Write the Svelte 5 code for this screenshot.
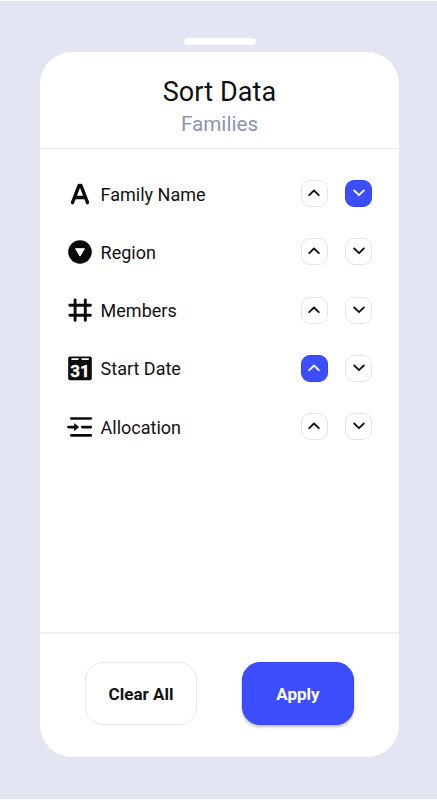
<script lang="ts">
  type Direction = "asc" | "desc" | null;

  interface Field {
    id: string;
    label: string;
    sort: Direction;
  }

  let fields: Field[] = [
    { id: "name", label: "Family Name", sort: "desc" },
    { id: "region", label: "Region", sort: null },
    { id: "members", label: "Members", sort: null },
    { id: "date", label: "Start Date", sort: "asc" },
    { id: "allocation", label: "Allocation", sort: null },
  ];

  function toggle(id: string, dir: Direction) {
    fields = fields.map((f) =>
      f.id === id ? { ...f, sort: f.sort === dir ? null : dir } : f
    );
  }

  function clearAll() {
    fields = fields.map((f) => ({ ...f, sort: null }));
  }
</script>

<div class="screen">
  <div class="handle"></div>
  <section class="sheet">
    <header>
      <h1>Sort Data</h1>
      <p>Families</p>
    </header>

    <ul>
      {#each fields as field (field.id)}
        <li>
          <svg class="icon" width="28" height="28" viewBox="0 0 28 28">
            {#if field.id === "name"}
              <path class="letter" d="M6.5 22.7 13.1 5.4h1.8l6.6 17.3M9 17.5h10" />
            {:else if field.id === "region"}
              <circle cx="14" cy="14" r="11.8" />
              <path class="knockout" d="M9.6 10.7h8.8L14 18.1z" />
            {:else if field.id === "members"}
              <path
                class="hash"
                d="M9.1 4v20.4M19.3 4v20.4M3.8 9.2h20.6M3.8 19.3h20.6"
              />
            {:else if field.id === "date"}
              <rect x="2.2" y="2.5" width="23.6" height="23.8" rx="1.8" />
              <path class="tabs" d="M5.4 5.1h7.2M15.6 5.1h7.2" />
              <text x="14" y="23.2">31</text>
            {:else}
              <path
                class="lines"
                d="M5.3 5.5h19.5M16.3 14.1h8.5M5.3 22.4h19.5M2.5 14.1h7"
              />
              <path d="M8.1 9.9 13.2 14.1 8.1 18.3z" />
            {/if}
          </svg>
          <span class="label">{field.label}</span>
          <button
            class="arrow"
            class:active={field.sort === "asc"}
            aria-label="Sort {field.label} ascending"
            on:click={() => toggle(field.id, "asc")}
          >
            <svg width="12" height="8" viewBox="0 0 12 8">
              <path d="M1.2 6.2 6 1.5l4.8 4.7" />
            </svg>
          </button>
          <button
            class="arrow"
            class:active={field.sort === "desc"}
            aria-label="Sort {field.label} descending"
            on:click={() => toggle(field.id, "desc")}
          >
            <svg width="12" height="8" viewBox="0 0 12 8">
              <path d="M1.2 1.5 6 6.2l4.8-4.7" />
            </svg>
          </button>
        </li>
      {/each}
    </ul>

    <footer>
      <button class="action" on:click={clearAll}>Clear All</button>
      <button class="action primary">Apply</button>
    </footer>
  </section>
</div>

<style>
  :global(body) {
    margin: 0;
    background: #fff;
  }
  .screen {
    box-sizing: border-box;
    display: flex;
    flex-direction: column;
    align-items: center;
    width: 437px;
    height: 800px;
    padding: 37px 0 0 2px;
    border-top: 1px solid #fff;
    border-bottom: 1px solid #fff;
    background: #e3e6f2;
    background-clip: padding-box;
    font-family: Roboto, "Liberation Sans", sans-serif;
    color: #111;
  }
  .handle {
    width: 72px;
    height: 7px;
    margin-bottom: 6.5px;
    border-radius: 4px;
    background: #fff;
  }
  .sheet {
    display: flex;
    flex-direction: column;
    width: 359px;
    height: 705px;
    border-radius: 32px;
    background: #fff;
  }
  header {
    box-sizing: border-box;
    height: 97px;
    padding-top: 23px;
    border-bottom: 1px solid #e9e9ed;
    text-align: center;
  }
  h1 {
    margin: 0;
    font-size: 27px;
    font-weight: 400;
    line-height: 34px;
    letter-spacing: 0.1px;
  }
  p {
    margin: 0;
    font-size: 20.7px;
    line-height: 30px;
    color: #8c94b1;
  }
  ul {
    flex: 1;
    margin: 0;
    padding: 16px 27px 0 26px;
    list-style: none;
  }
  li {
    display: flex;
    align-items: center;
    height: 58.25px;
  }
  .icon {
    flex: none;
    overflow: visible;
    fill: #0b0b0b;
  }
  .letter,
  .hash,
  .lines,
  .tabs {
    fill: none;
    stroke: #0b0b0b;
    stroke-linecap: round;
    stroke-linejoin: round;
  }
  .letter {
    stroke-width: 3.4;
  }
  .hash {
    stroke-width: 2.9;
  }
  .lines {
    stroke-width: 2.7;
  }
  .tabs {
    stroke: #fff;
    stroke-width: 1.6;
    stroke-linecap: butt;
  }
  .knockout {
    fill: #fff;
    stroke: #fff;
    stroke-linejoin: round;
  }
  .icon text {
    fill: #fff;
    stroke: #fff;
    stroke-width: 0.3;
    font-size: 17px;
    font-weight: 700;
    text-anchor: middle;
  }
  .label {
    flex: 1;
    margin-left: 6.6px;
    padding-top: 2px;
    font-size: 18px;
    line-height: 24px;
  }
  .arrow {
    box-sizing: border-box;
    display: flex;
    align-items: center;
    justify-content: center;
    width: 27px;
    height: 27px;
    padding: 0 0 1px;
    border: 1px solid #e4e4ec;
    border-radius: 9px;
    background: #fff;
    color: #111;
  }
  .arrow + .arrow {
    margin-left: 17.5px;
  }
  .arrow path {
    fill: none;
    stroke: currentColor;
    stroke-width: 1.8;
    stroke-linecap: round;
    stroke-linejoin: round;
  }
  .arrow.active {
    border-color: #3344fb;
    background: #3d4eff;
    color: #fff;
  }
  footer {
    box-sizing: border-box;
    display: flex;
    justify-content: center;
    gap: 45px;
    height: 125px;
    padding-top: 28px;
    border-top: 2px solid #f0f0f1;
  }
  .action {
    box-sizing: border-box;
    width: 112px;
    height: 63px;
    padding: 2px 0 0;
    border: 1px solid #e7e7e9;
    border-radius: 18px;
    background: #fff;
    color: #111;
    font-family: inherit;
    font-size: 17px;
    font-weight: 700;
  }
  .action.primary {
    border-color: #3344fb;
    background: #3d4eff;
    color: #fff;
    box-shadow: 0 2px 3px rgba(0, 0, 0, 0.25);
  }
</style>
